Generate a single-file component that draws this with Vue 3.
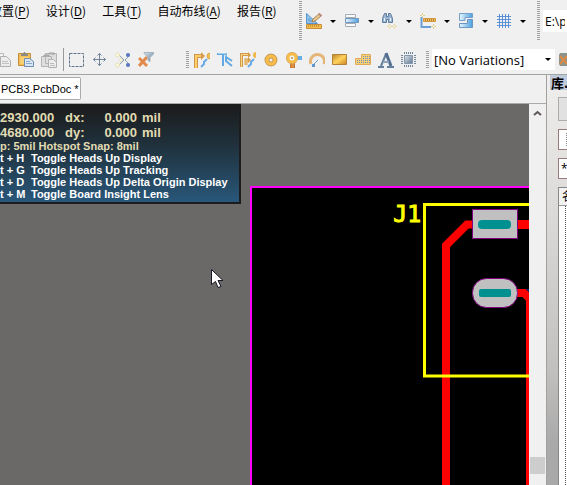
<script setup>
import { ref } from 'vue'

const menus = [
  { name: '放置', key: 'P' },
  { name: '设计', key: 'D' },
  { name: '工具', key: 'T' },
  { name: '自动布线', key: 'A' },
  { name: '报告', key: 'R' },
]
const utilities = [
  { id: 'draft', label: 'Utility tools' },
  { id: 'align', label: 'Alignment tools' },
  { id: 'find', label: 'Find selections' },
  { id: 'dimension', label: 'Dimensions' },
  { id: 'room', label: 'Rooms' },
  { id: 'grid', label: 'Grids' },
]
const clipboard = [
  { id: 'copy', label: 'Copy' },
  { id: 'paste', label: 'Paste' },
  { id: 'stamp', label: 'Rubber stamp' },
]
const editing = [
  { id: 'marquee', label: 'Select area' },
  { id: 'move', label: 'Move' },
  { id: 'deselect', label: 'Deselect' },
  { id: 'clear', label: 'Clear filter' },
]
const placing = [
  { id: 'route', label: 'Route' },
  { id: 'diff', label: 'Differential pair' },
  { id: 'multi', label: 'Multiple traces' },
  { id: 'pad', label: 'Pad' },
  { id: 'via', label: 'Via' },
  { id: 'arc', label: 'Arc' },
  { id: 'fill', label: 'Fill' },
  { id: 'polygon', label: 'Polygon' },
  { id: 'text', label: 'Text' },
  { id: 'chip', label: 'Component' },
]
const shortcuts = [
  { key: 'H', action: 'Toggle Heads Up Display' },
  { key: 'G', action: 'Toggle Heads Up Tracking' },
  { key: 'D', action: 'Toggle Heads Up Delta Origin Display' },
  { key: 'M', action: 'Toggle Board Insight Lens' },
]
const path = ref('E:\\p')
const mask = ref('*')
</script>

<template>
  <div class="app">
    <svg class="defs" aria-hidden="true">
      <defs>
        <linearGradient id="gold" x2="1" y2="1"><stop stop-color="#b9822f" /><stop offset=".5" stop-color="#ffd35a" /><stop offset="1" stop-color="#c98425" /></linearGradient>
        <linearGradient id="sky" x2="1"><stop stop-color="#eaf5fc" /><stop offset="1" stop-color="#4b9fe0" /></linearGradient>
        <linearGradient id="steel" x2="1" y2="1"><stop stop-color="#dce6ef" /><stop offset="1" stop-color="#5f7690" /></linearGradient>
      </defs>
      <symbol id="draft" viewBox="0 0 16 16">
        <path d="M.5.5v10h11z" fill="#8fc4ec" stroke="#5a93cc" /><path d="M3 5.500v2.500h2.500z" fill="#f0f0f0" stroke="#5a93cc" />
        <path d="M6 9l1-3 6-5 2 2-6 5z" fill="#edc98a" stroke="#a5835c" /><path d="M12.500.5l3 2.500" stroke="#c08880" stroke-width="2" />
        <path d="M.5 11.500h15v4H.5z" fill="#f4bd4c" stroke="#c68e37" /><path d="M2.500 12v2M4.500 12v2M6.500 12v2M8.500 12v2M10.500 12v2M12.500 12v2" stroke="#c9913c" />
      </symbol>
      <symbol id="align" viewBox="0 0 16 16">
        <path d="M1.500 1.500h10v3h-10zM1.500 10.500h10v3h-10z" fill="#f8fafc" stroke="#a5acb5" />
        <path d="M1.500 5.500h13v4h-13z" fill="url(#sky)" stroke="#7098c0" />
      </symbol>
      <symbol id="find" viewBox="0 0 16 16">
        <path d="M2.500.5h2v3h2v-3h2l2 5v4h-4v-3h-2v3h-4v-4z" fill="#9bb7d6" stroke="#617b9c" /><path d="M2.500 5v3M8.500 5v3" stroke="#e9f4ff" />
        <path d="M7.500 11v5M5 13.500h5M12.500 11v5M10 13.500h5" stroke="#ead793" /><path d="M7 13h1v1H7zM12 13h1v1h-1z" fill="#fff" />
      </symbol>
      <symbol id="dimension" viewBox="0 0 16 16">
        <path d="M1.500 4v10H11" fill="none" stroke="#69a0da" stroke-width="2" /><path d="M3.500 5.500h12v3h-12z" fill="#f5bd55" stroke="#d19842" />
        <path d="M5.500 6v2M7.500 6v2M9.500 6v2M11.500 6v2M13.500 6v2" stroke="#b98639" /><path d="M2.500 0v4M0 2.500h5M13.500 11v5M11 13.500h5" stroke="#e5cf88" /><path d="M2 2h1v1H2zM13 13h1v1h-1z" fill="#fff" />
      </symbol>
      <symbol id="room" viewBox="0 0 16 16">
        <path d="M1.500.5h13v4H7v3H1.500z" fill="url(#sky)" stroke="#75a0cb" /><path d="M9.500 6.500h5v8h-13v-4h8z" fill="url(#sky)" stroke="#6c96c0" />
      </symbol>
      <symbol id="grid" viewBox="0 0 16 16"><path d="M3.500 1v14M6.500 1v14M9.500 1v14M12.500 1v14M1 3.500h14M1 6.500h14M1 9.500h14M1 12.500h14" stroke="#5d91d5" /></symbol>
      <symbol id="copy" viewBox="0 0 16 16">
        <path d="M1.500 1.500h7v9h-7z" fill="#f5f5f5" stroke="#b8b8b8" /><path d="M5.500 4.500h6l4 4v6h-10z" fill="#ececec" stroke="#b0b0b0" /><path d="M7 9.500h6M7 11.500h7" stroke="#c0c0c0" />
      </symbol>
      <symbol id="paste" viewBox="0 0 16 16">
        <path d="M.5 1.500h12v12H.5z" fill="#f4bf55" stroke="#bf8d3c" /><path d="M3 4V2h2l1-2h1l1 2h2v2z" fill="#8a8c8b" />
        <path d="M2.500 5h8v7h-8z" fill="#f8d078" /><path d="M6.500 6.500h5l4 3v5h-9z" fill="#d7e7f7" stroke="#6d8caf" /><path d="M8 9.500h4M8 11.500h6" stroke="#8baacb" />
      </symbol>
      <symbol id="stamp" viewBox="0 0 16 16">
        <path d="M4.500 1.500h11v10h-11zM.5 4.500h10v10H.5z" fill="#dedede" stroke="#b4b4b4" /><path d="M3 5V3h5v2M8 2V1h5v2" stroke="#a4a4a4" fill="#b0b0b0" />
        <path d="M7.500 7.500h5l3 3v5h-8z" fill="#eee" stroke="#b0b0b0" /><path d="M9 11.500h4M9 13.500h5" stroke="#bbb" />
      </symbol>
      <symbol id="marquee" viewBox="0 0 16 16"><path d="M.5 1.500h14v13H.5z" fill="none" stroke="#62748b" stroke-dasharray="3 1" /></symbol>
      <symbol id="move" viewBox="0 0 16 16"><path d="M7.500 1v13M1 7.500h13M5.500 3.500l2-2 2 2M5.500 11.500l2 2 2-2M3.500 5.500l-2 2 2 2M11.500 5.500l2 2-2 2" fill="none" stroke="#71849a" /></symbol>
      <symbol id="deselect" viewBox="0 0 16 16">
        <path d="M5 4l4 4-4 4M14 4l-4 4 4 4" fill="none" stroke="#8aa0b4" /><g fill="#5577be"><circle cx="13" cy="3" r="2" /><circle cx="13" cy="13" r="2" /></g>
        <g fill="#faf8df" stroke="#d6d08c" stroke-dasharray="1 1"><circle cx="2.500" cy="3" r="2" /><circle cx="6" cy="8" r="1.500" /><circle cx="2.500" cy="13" r="2" /></g>
      </symbol>
      <symbol id="clear" viewBox="0 0 16 16">
        <path d="M1 6l8 8M9 5l-8 9" stroke="#e28a4c" stroke-width="3" /><path d="M6 .5h10v1l-4 4v4l-2-1V5L6 1.500z" fill="url(#steel)" stroke="#a5b5c3" />
      </symbol>
      <symbol id="route" viewBox="0 0 16 16">
        <path d="M2 16V4h6" fill="none" stroke="#cf944a" stroke-width="4" /><path d="M2 16V4h6" fill="none" stroke="#ffcf68" stroke-width="2" /><path d="M7 0l4 4-4 4z" fill="#d89b4c" />
        <path d="M7 15l3-3v-2l3-3" fill="none" stroke="#6aaae5" stroke-width="2" /><path d="M16 1a3 3 0 0 0 0 6" fill="#f3bd4d" stroke="#d9a650" />
      </symbol>
      <symbol id="diff" viewBox="0 0 16 16"><path d="M0 2h9v3l6 4M6 3v11M9 5v4l6 5" fill="none" stroke="#62a9e4" stroke-width="2" /><path d="M1 1.500h8v3" fill="none" stroke="#a5d4ef" /></symbol>
      <symbol id="multi" viewBox="0 0 16 16">
        <path d="M1.500 15V2.500H9M6 13V8h3" fill="none" stroke="#cf9a50" stroke-width="3" /><path d="M1.500 15V2.500H9M6 13V8h3" fill="none" stroke="#ffd780" /><path d="M8 0l3 3-3 3M8 5l3 3-3 3" fill="#d59c48" />
        <path d="M8 15l3-3v-2l3-3" fill="none" stroke="#67aae7" stroke-width="2" /><path d="M16 0a3 3 0 0 0 0 6" fill="#efb84d" />
      </symbol>
      <symbol id="pad" viewBox="0 0 16 16"><circle cx="8" cy="8" r="4" fill="none" stroke="#c79a5c" stroke-width="5" /><circle cx="8" cy="8" r="4" fill="none" stroke="#f8bd49" stroke-width="3" /></symbol>
      <symbol id="via" viewBox="0 0 16 16">
        <path d="M9 4h7v4H9z" fill="#65afe5" /><path d="M4.500 9h4v7h-4z" fill="#e1903e" stroke="#bc783a" /><circle cx="6" cy="6" r="4" fill="#f0f0f0" stroke="#c79a5c" stroke-width="4" /><circle cx="6" cy="6" r="4" fill="#eef5f6" stroke="#f8bd49" stroke-width="3" /><circle cx="6" cy="6" r="1" fill="#c18d41" />
      </symbol>
      <symbol id="arc" viewBox="0 0 16 16"><path d="M2 12a7 7 0 1 1 13 0" fill="none" stroke="#e5b578" stroke-width="3" /><path d="M4 13l5-5" stroke="#6c9bc4" /><path d="M3 12h3v3H3z" fill="#6099cf" /></symbol>
      <symbol id="fill" viewBox="0 0 16 16"><path d="M.5 2.500h14v10H.5z" fill="url(#gold)" stroke="#b38339" /></symbol>
      <symbol id="polygon" viewBox="0 0 16 16"><path d="M6.500 2.500h9v10H.5v-6h6z" fill="#f5cf7a" stroke="#e0ac59" /><path d="M8 4.500h7M8 6.500h7M2 8.500h13M2 10.500h13" stroke="#7890b0" stroke-dasharray="1 1" /></symbol>
      <symbol id="text" viewBox="0 0 16 16"><path d="M0 15h6M9 15h7M3 14L8 2" fill="none" stroke="#65809f" stroke-width="2" /><path d="M8 1l5 13" stroke="#526f91" stroke-width="3" /><path d="M5 10h6" stroke="#8ba3bd" stroke-width="2" /></symbol>
      <symbol id="chip" viewBox="0 0 16 16"><path d="M3 1h10M3 14h10M1 3v10M14 3v10" stroke="#71859a" stroke-width="2" stroke-dasharray="1 1" /><path d="M3.500 3.500h8v8h-8z" fill="url(#steel)" stroke="#8496a8" /></symbol>
      <symbol id="variant" viewBox="0 0 16 16"><path d="M1 1h15v13H1L0 12V3z" fill="#8a948c" /><path d="M1 4l7 8M8 4l-7 8" stroke="#df8a45" stroke-width="2" /><path d="M9 5h6M9 9h6" stroke="#61767e" stroke-width="2" /></symbol>
      <symbol id="caret" viewBox="0 0 6 3"><path d="M0 0h6L3 3z" fill="#000" /></symbol>
    </svg>

    <header class="top">
      <nav class="menu" aria-label="Main menu">
        <button v-for="m in menus" :key="m.key" class="menu-item">{{ m.name }}(<u>{{ m.key }}</u>)</button>
      </nav>
      <div class="utility">
        <span class="grip" />
        <button v-for="t in utilities" :key="t.id" class="drop" :aria-label="t.label">
          <svg class="icon"><use :href="'#' + t.id" /></svg>
          <svg class="caret"><use href="#caret" /></svg>
        </button>
        <span class="grip" />
        <input v-model="path" class="path" aria-label="Document path" />
      </div>
    </header>

    <div class="tools" role="toolbar">
      <div class="group clip">
        <button v-for="t in clipboard" :key="t.id" class="tool" :aria-label="t.label"><svg class="icon"><use :href="'#' + t.id" /></svg></button>
      </div>
      <span class="divider" />
      <div class="group edit">
        <button v-for="t in editing" :key="t.id" class="tool" :aria-label="t.label"><svg class="icon"><use :href="'#' + t.id" /></svg></button>
      </div>
      <span class="grip short" />
      <div class="group place">
        <button v-for="t in placing" :key="t.id" class="tool" :aria-label="t.label"><svg class="icon"><use :href="'#' + t.id" /></svg></button>
      </div>
      <span class="grip short" />
      <div class="variant">
        <select aria-label="Variation"><option>[No Variations]</option></select>
        <svg class="caret"><use href="#caret" /></svg>
      </div>
      <button class="tool" aria-label="Edit variants"><svg class="icon"><use href="#variant" /></svg></button>
    </div>

    <div class="body">
      <main class="doc">
        <div class="tabs"><button class="tab">PCB3.PcbDoc *</button></div>
        <div class="view">
          <div class="canvas">
            <svg class="board" role="img" aria-label="Circuit board">
              <rect x="251" y="83" width="100%" height="100%" fill="#000" stroke="#f0f" stroke-width="2" />
              <path d="M473 120.500h-6l-21 21v1000" fill="none" stroke="#f00" stroke-width="8" />
              <path d="M517 120.500h500" stroke="#f00" stroke-width="9" />
              <path d="M526 185h3v3z" fill="#003080" />
              <path d="M516 189h8l6 6v1000" fill="none" stroke="#f00" stroke-width="8" />
              <path d="M1000 100.500H424.500v171.500H1000" fill="none" stroke="#ff0" stroke-width="3" />
              <rect x="472.500" y="105.500" width="45" height="29" fill="#c0c0c0" stroke="#800080" />
              <rect x="472.500" y="174.500" width="45" height="29" rx="14" fill="#c0c0c0" stroke="#800080" />
              <rect x="478" y="116" width="33" height="9" rx="4" fill="#009090" />
              <rect x="479" y="185" width="32" height="8" rx="2" fill="#009090" />
              <text x="421" y="118" text-anchor="end" class="designator">J1</text>
            </svg>
            <section class="hud" aria-label="Heads up display">
              <div class="coords">
                <span>2930.000</span><span>dx:</span><span class="num">0.000</span><span>mil</span>
                <span>4680.000</span><span>dy:</span><span class="num">0.000</span><span>mil</span>
              </div>
              <p class="snap">p: 5mil Hotspot Snap: 8mil</p>
              <div v-for="s in shortcuts" :key="s.key" class="shortcut"><span>t + {{ s.key }}</span><span>{{ s.action }}</span></div>
            </section>
            <svg class="cursor" viewBox="0 0 12 20"><path d="M.5.5v15l4-3 2.500 6 3-1-3-6h5z" fill="#fff" stroke="#151525" /></svg>
          </div>
          <div class="scroll">
            <button class="up" aria-label="Scroll up"><svg viewBox="0 0 9 6"><path d="M1 5l3.500-3L8 5" fill="none" stroke="#605858" stroke-width="2" /></svg></button>
            <span class="thumb" />
          </div>
        </div>
      </main>
      <aside class="panel">
        <h2 class="title">库.</h2>
        <div class="stack">
          <button class="wide" aria-label="Libraries" />
          <div class="field library"><span class="dots" /></div>
          <input v-model="mask" class="field" aria-label="Filter" />
          <div class="list"><div class="head">名</div></div>
        </div>
      </aside>
    </div>
  </div>
</template>

<style>
body { margin: 0; overflow: hidden; }
</style>

<style scoped>
.app { display: flex; flex-direction: column; height: 100vh; overflow: hidden; background: #f0f0f0; color: #000; font-family: "Noto Sans", "Noto Sans CJK SC", sans-serif; font-size: 12px; }
.app * { box-sizing: border-box; }
.defs { position: absolute; width: 0; height: 0; }
button { flex: none; margin: 0; padding: 0; border: 0; background: none; color: inherit; font: inherit; }
.icon { display: block; width: 16px; height: 16px; }
.caret { display: block; width: 6px; height: 3px; }
.top { display: flex; flex: none; height: 45px; overflow: hidden; }
.menu { display: flex; flex: none; gap: 16px; width: 299px; margin-left: -10px; margin-right: 10px; height: 22px; }
.menu-item { line-height: 22px; white-space: nowrap; font-family: "Noto Sans CJK SC", sans-serif; }
.menu-item u { text-underline-offset: 2px; }
.utility { display: flex; align-items: center; flex: 1; height: 42px; min-width: 0; }
.grip { flex: none; width: 3px; height: 40px; background: repeating-linear-gradient(#a2a2a2 0 1px, #f0f0f0 1px 2px); }
.grip.short { height: 18px; }
.drop { display: flex; align-items: center; gap: 8px; width: 38px; padding-left: 4px; }
.utility .grip + .path { margin-left: 3px; }
.drop + .grip { margin-left: 7px; }
.path { flex: 1; min-width: 0; height: 22px; padding: 0 2px; border: 0; background: #fff; font: 12px "Open Sans", sans-serif; }
.tools { display: flex; flex: none; align-items: center; height: 30px; border-bottom: 1px solid #a2a6a2; overflow: hidden; }
.group { display: flex; flex: none; gap: 7px; }
.clip { margin-left: -5px; }
.divider { flex: none; width: 1px; height: 23px; margin: 0 5px 0 6px; background: #999; }
.edit { width: 117px; }
.place { margin: 0 9px 0 5px; }
.variant { display: grid; flex: none; align-items: center; width: 123px; margin: 0 4px 0 3px; background: #fff; }
.variant select { grid-area: 1 / 1; width: 100%; height: 21px; padding: 0 2px; border: 0; appearance: none; background: #fff; color: #000; font: 13px "Open Sans", sans-serif; }
.variant .caret { grid-area: 1 / 1; justify-self: end; margin-right: 4px; pointer-events: none; }
.body { display: flex; flex: 1; min-height: 0; }
.doc { display: flex; flex: 1; flex-direction: column; min-width: 0; border-right: 1px solid #a0a0a0; }
.tabs { flex: none; height: 29px; padding-top: 2px; border-bottom: 1px solid #aaa; }
.tab { height: 23px; padding: 0 1px; border: 1px solid #aaa; border-left: 0; border-radius: 0 2px 2px 0; background: #fff; font: 11px "Liberation Sans", sans-serif; }
.view { display: flex; flex: 1; min-height: 0; }
.canvas { position: relative; flex: 1; min-width: 0; overflow: hidden; background: #6b6967; }
.board { display: block; width: 100%; height: 100%; }
.designator { fill: #ff0; stroke: #ff0; stroke-width: 1px; font: 23px "DejaVu Sans Mono", monospace; }
.hud { position: absolute; top: 0; left: 0; width: 241px; padding: 6px 0 2px; border: solid #1c1c1e; border-width: 0 2px 2px 0; background: linear-gradient(#1b1b1b, #20333f 45%, #29577a); color: #fff; font: bold 11px/12px "Liberation Sans", sans-serif; white-space: nowrap; }
.coords { display: grid; grid-template-columns: 65px 24px 48px 1fr; color: #e2dcb2; font-size: 13px; line-height: 15px; }
.coords span:nth-child(4n) { padding-left: 5px; }
.num { text-align: right; }
.snap { margin: 0; color: #e2dcb2; }
.shortcut { display: grid; grid-template-columns: 31px 1fr; }
.cursor { position: absolute; top: 165px; left: 211px; width: 12px; height: 20px; }
.scroll { display: flex; flex: none; flex-direction: column; align-items: center; justify-content: space-between; width: 17px; padding-bottom: 11px; background: #f0f0f0; }
.up { width: 17px; height: 17px; padding: 6px 4px; }
.up svg { display: block; width: 9px; height: 6px; }
.thumb { width: 15px; height: 17px; background: #cdcdcd; }
.panel { flex: none; width: 20px; overflow: hidden; background: linear-gradient(#f0efee, #dedcdb 30%, #c2c0be 72%, #a9a9a9 90%); }
.title { height: 15px; margin: 0 0 0 3px; padding-left: 1px; background: #bfc9dc; font: bold 13px/15px "Noto Sans CJK SC", sans-serif; white-space: nowrap; }
.stack { display: flex; flex-direction: column; gap: 8px; width: 120px; height: 100%; padding: 7px 0 0 11px; }
.wide { height: 24px; border: 1px solid #adadad; background: #e1e1e1; }
.field { flex: none; width: 100%; height: 21px; padding: 0 2px; border: 1px solid #977a7a; background: #fff; font: 12px "Open Sans", sans-serif; }
.dots { display: block; width: 1px; height: 13px; margin: 3px 5px; background: repeating-linear-gradient(#888 0 1px, #fff 1px 2px); }
.list { flex: 1; border: 1px solid #888; background: #fff; }
.list::after { content: ""; display: block; height: 100%; margin-left: 6px; border-left: 1px dotted #555; }
.head { height: 18px; padding-left: 3px; border-bottom: 1px solid #999; background: #f2f2f2; font: 12px/16px "Noto Sans CJK SC", sans-serif; }
</style>
